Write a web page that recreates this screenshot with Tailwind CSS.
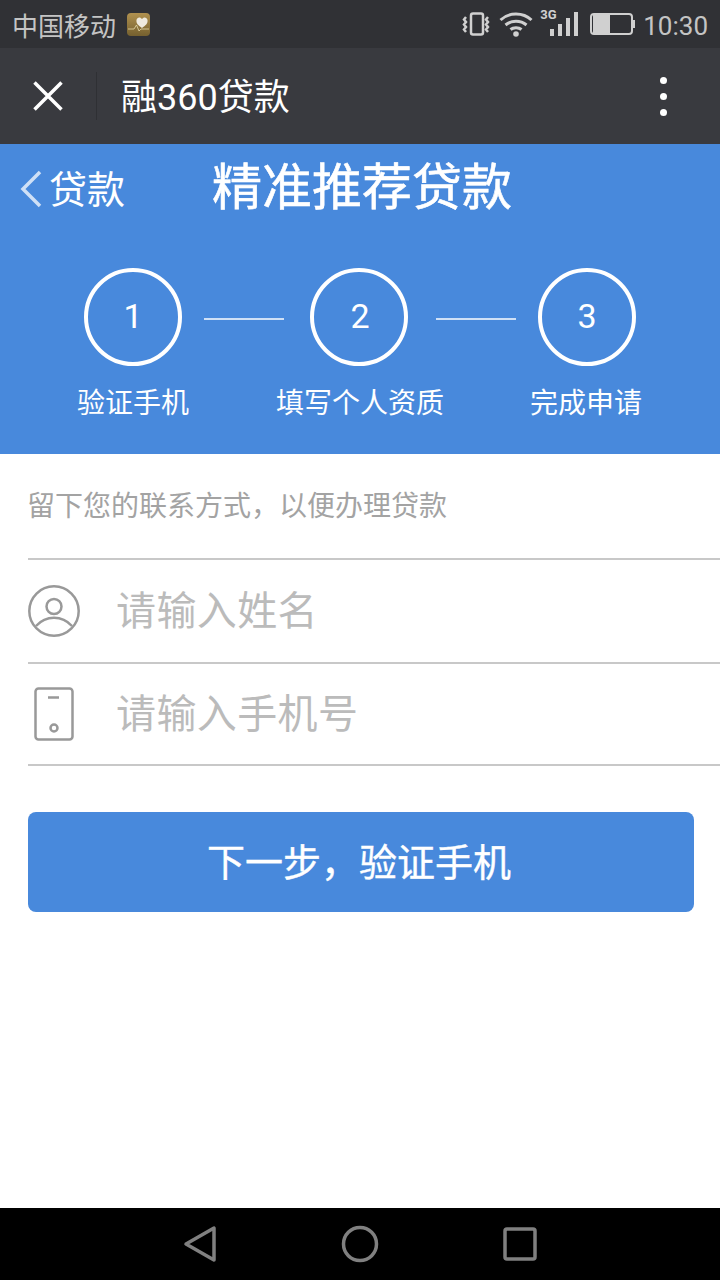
<!DOCTYPE html>
<html lang="zh">
  <head>
    <meta charset="UTF-8" />
    <meta name="viewport" content="width=device-width, initial-scale=1.0" />
    <title>融360贷款</title>
    <script src="https://cdn.jsdelivr.net/npm/@tailwindcss/browser@4"></script>
  </head>
  <body class="w-[720px] h-[1280px] overflow-hidden bg-white flex flex-col font-['Roboto','Noto_Sans_CJK_SC',sans-serif]">
    <!-- Status bar -->
    <div class="h-12 bg-[#303135] flex items-center pl-3 pr-3 text-[#c4c4c4]">
      <span class="mt-[5px] text-[26px] leading-none">中国移动</span>
      <svg class="ml-[11px] mt-px" width="23" height="23" viewBox="0 0 23 23">
        <defs>
          <linearGradient id="badge" x1="0" y1="0" x2="0" y2="1">
            <stop offset="0" stop-color="#b0914f" />
            <stop offset="1" stop-color="#75602f" />
          </linearGradient>
        </defs>
        <rect width="23" height="23" rx="4" fill="url(#badge)" />
        <path d="M15 15c-3.500-2.500-6-4.500-5.500-8 .5-3 4-3.500 5.500-1 1.500-2.500 5-2 5.500 1 .5 3.500-2 5.500-5.500 8z" fill="#efeadf" />
        <path d="M1 16h6l2.500-4 2.500 6 2-2h8" fill="none" stroke="#e6d9a8" stroke-width="0.8" />
      </svg>
      <div class="ml-auto flex items-center">
        <svg width="28" height="24" viewBox="0 0 28 24" fill="none" stroke="#d0d0d0" stroke-width="2.500">
          <rect x="9" y="1.500" width="12" height="21" rx="2" />
          <path d="M4 5L2 7.500 4 10 2 12.500 4 15 2 17.500 4 20M26 5l-2 2.500 2 2.500-2 2.500 2 2.500-2 2.500 2 2.500" />
        </svg>
        <svg class="ml-[9px]" width="34" height="26" viewBox="0 0 34 26" fill="none" stroke="#d0d0d0" stroke-width="3">
          <path d="M1.500 9C10 1 24 1 32.500 9M6.500 14c6-5 15-5 21 0M11.500 18.500c3-2.500 8-2.500 11 0" />
          <circle cx="17" cy="23" r="2.800" fill="#d0d0d0" stroke="none" />
        </svg>
        <div class="relative w-[40px] h-[30px] ml-[5px]">
          <span class="absolute left-[2px] -top-[1px] text-[13px] leading-none font-bold text-[#d0d0d0]">3G</span>
          <div class="absolute bottom-[3px] right-0 flex items-end gap-1">
            <div class="w-1 h-[7px] bg-[#d0d0d0]"></div>
            <div class="w-1 h-[12px] bg-[#d0d0d0]"></div>
            <div class="w-1 h-[18px] bg-[#d0d0d0]"></div>
            <div class="w-1 h-[24px] bg-[#d0d0d0]"></div>
          </div>
        </div>
        <div class="ml-3 w-[43px] h-[22px] rounded-[4px] border-2 border-[#d0d0d0] px-px relative">
          <div class="h-full w-[17px] bg-[#d0d0d0]"></div>
          <div class="absolute -right-[4px] top-[5px] w-[2px] h-2 bg-[#d0d0d0]"></div>
        </div>
        <span class="ml-[10px] mt-1 text-[26px] leading-none">10:30</span>
      </div>
    </div>

    <!-- Title bar -->
    <div class="h-24 bg-[#393a3f] flex items-center text-white">
      <div class="w-24 flex justify-center">
        <svg width="32" height="32" viewBox="0 0 32 32" fill="none" stroke="#fff" stroke-width="3.500">
          <path d="M2.500 2.500l27 27M29.500 2.500l-27 27" />
        </svg>
      </div>
      <div class="w-px h-12 bg-[#2f3034]"></div>
      <span class="ml-6 mt-1 text-[36px] leading-none">融360贷款</span>
      <div class="ml-auto mr-[53px] flex flex-col gap-[9px]">
        <div class="w-[7px] h-[7px] rounded-full bg-white"></div>
        <div class="w-[7px] h-[7px] rounded-full bg-white"></div>
        <div class="w-[7px] h-[7px] rounded-full bg-white"></div>
      </div>
    </div>

    <!-- Blue header -->
    <div class="h-[310px] bg-[#4889dc] text-white flex flex-col">
      <div class="relative h-[88px] flex justify-center items-center pl-1">
        <div class="absolute left-[19px] top-[25px] flex items-center">
          <svg width="24" height="38" viewBox="0 0 24 38" fill="none" stroke="#cfe0f6" stroke-width="3.500">
            <path d="M21 2L4 19l17 17" />
          </svg>
          <span class="ml-[6px] mt-[2px] text-[38px] leading-none">贷款</span>
        </div>
        <span class="text-[50px] leading-none [-webkit-text-stroke:0.6px_white]">精准推荐贷款</span>
      </div>
      <div class="mt-9 flex flex-col">
        <div class="flex items-center pl-[84px]">
          <div class="w-[98px] h-[98px] rounded-full border-4 border-white flex items-center justify-center pb-[2px] text-[34px]">1</div>
          <div class="ml-[22px] mt-1 w-20 h-[2px] bg-[#cfe0f6]"></div>
          <div class="ml-[26px] w-[98px] h-[98px] rounded-full border-4 border-white flex items-center justify-center pb-[2px] pl-[2px] text-[34px]">2</div>
          <div class="ml-7 mt-1 w-20 h-[2px] bg-[#cfe0f6]"></div>
          <div class="ml-[22px] w-[98px] h-[98px] rounded-full border-4 border-white flex items-center justify-center pb-[2px] text-[34px]">3</div>
        </div>
        <div class="relative mt-[22px] h-8 text-[28px] leading-8">
          <span class="absolute left-[77px]">验证手机</span>
          <span class="absolute left-[276px]">填写个人资质</span>
          <span class="absolute left-[530px]">完成申请</span>
        </div>
      </div>
    </div>

    <!-- Form -->
    <p class="ml-[27px] h-[104px] pt-9 text-[28px] leading-[34px] text-[#a3a3a3]">留下您的联系方式，以便办理贷款</p>
    <div class="ml-7 h-[104px] border-t-2 border-[#c8c8c8] flex items-center">
      <svg width="52" height="52" viewBox="0 0 52 52" fill="none" stroke="#999" stroke-width="2.500">
        <circle cx="26" cy="26" r="24.700" />
        <circle cx="26" cy="21.500" r="7.500" />
        <path d="M8 41c10-11 26-11 36 0" />
      </svg>
      <span class="ml-9 mt-[2px] text-[40px] tracking-[0.4px] leading-none text-[#bbb]">请输入姓名</span>
    </div>
    <div class="ml-7 h-[102px] border-t-2 border-[#c8c8c8] flex items-center">
      <svg class="ml-[6px]" width="40" height="54" viewBox="0 0 40 54" fill="none" stroke="#999" stroke-width="2.500">
        <rect x="1.500" y="1.500" width="37" height="51" rx="3" />
        <path d="M14 10.500h11" />
        <circle cx="20" cy="41" r="3.500" />
      </svg>
      <span class="ml-[42px] mt-[2px] text-[40px] tracking-[0.4px] leading-none text-[#bbb]">请输入手机号</span>
    </div>
    <div class="ml-7 border-t-2 border-[#c8c8c8]"></div>
    <button class="mt-[46px] ml-7 w-[666px] h-[100px] rounded-lg bg-[#4889dc] text-white text-[38px] pr-1 pt-[2px] [-webkit-text-stroke:0.4px_white]">下一步，验证手机</button>

    <!-- Android nav bar -->
    <div class="mt-auto h-[72px] bg-black flex items-center justify-center gap-[106px]">
      <svg width="54" height="40" viewBox="0 0 54 40" fill="none" stroke="#808080" stroke-width="3.500" stroke-linejoin="round">
        <path d="M41 4v32L13 20z" />
      </svg>
      <svg width="54" height="40" viewBox="0 0 54 40" fill="none" stroke="#808080" stroke-width="3.500">
        <circle cx="27" cy="20" r="16.500" />
      </svg>
      <svg width="54" height="40" viewBox="0 0 54 40" fill="none" stroke="#808080" stroke-width="3.500" stroke-linejoin="round">
        <rect x="12" y="5" width="30" height="30" rx="2" />
      </svg>
    </div>
  </body>
</html>
